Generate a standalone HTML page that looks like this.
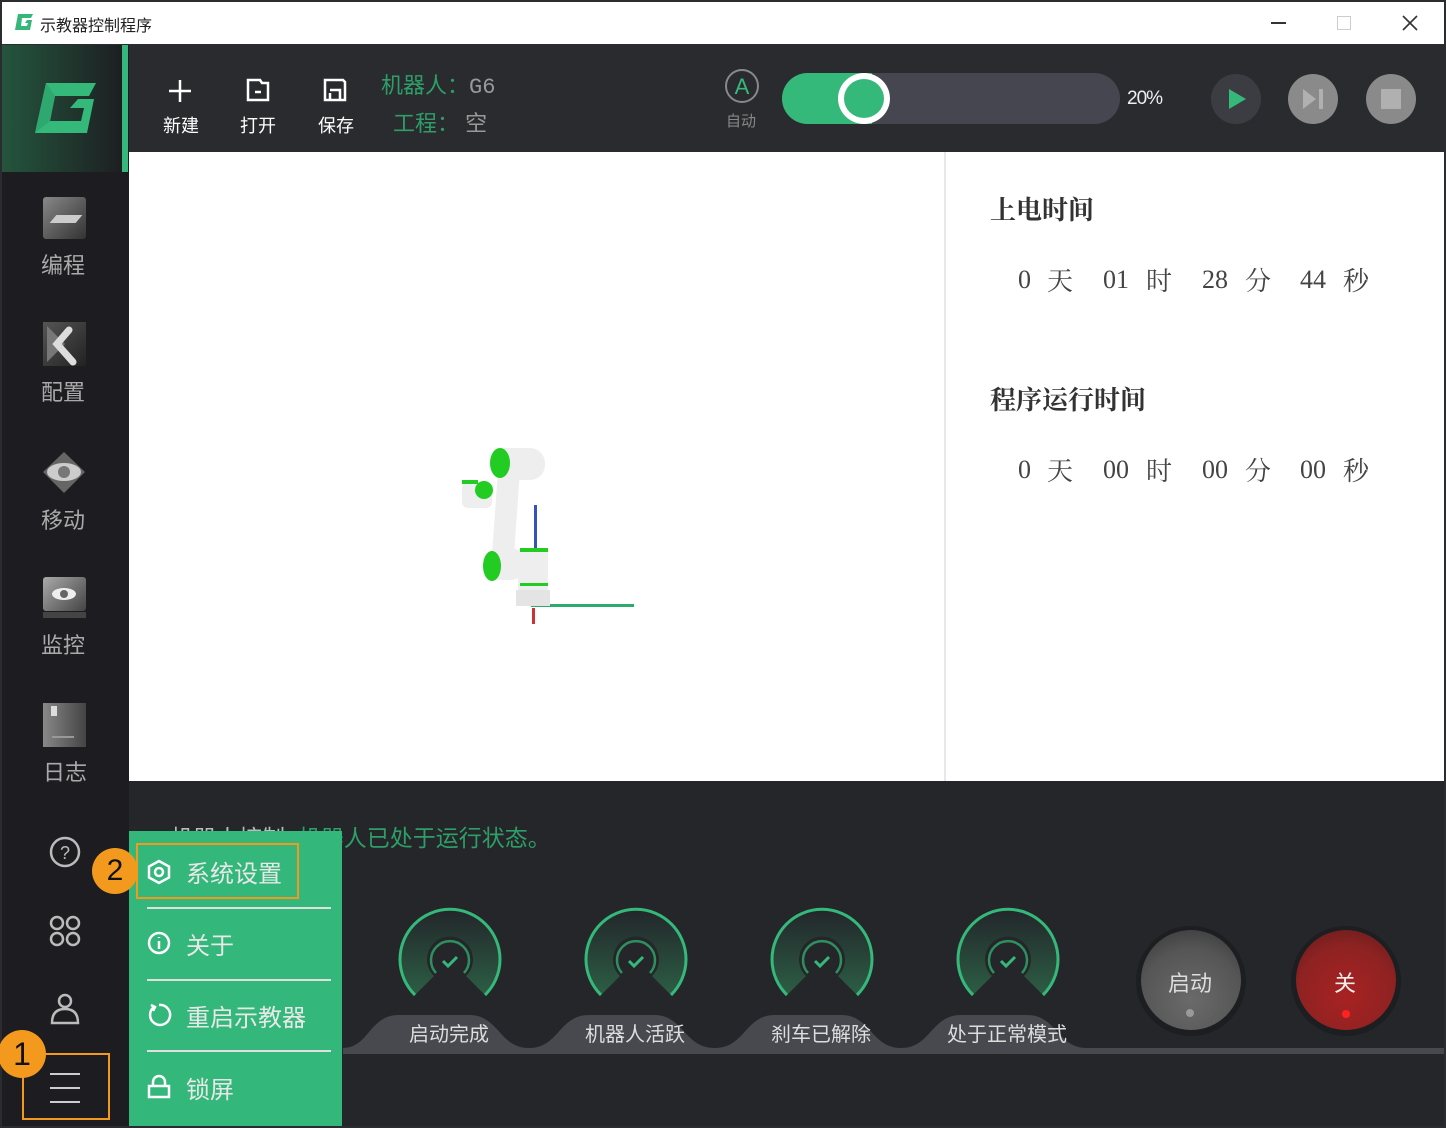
<!DOCTYPE html>
<html><head><meta charset="utf-8">
<style>
*{margin:0;padding:0;box-sizing:border-box}
body{width:1446px;height:1128px;overflow:hidden;background:#2b2c30;font-family:"Liberation Sans","Noto Sans CJK SC",sans-serif;position:relative}
.abs{position:absolute}
.t{white-space:nowrap}
.tm{position:absolute;font-size:26px;color:#444;font-family:'Liberation Serif','Noto Serif CJK SC',serif;white-space:nowrap}
.d{margin-top:4px}
</style></head><body>
<div class="abs" style="left:2px;top:2px;width:1442px;height:42px;background:#fff"></div>
<svg class="abs" style="left:14px;top:13px" width="20" height="18" viewBox="0 0 20 18"><path d="M4 1 L19 1 L17 5 L8 5 L7 13 L13 13 L14 10 L11 10 L13 7 L18 7 L16 17 L1 17 Z" fill="#35b77b"/></svg>
<div class="abs t" style="left:40px;top:12px;font-size:16px;color:#222">示教器控制程序</div>
<div class="abs" style="left:1271px;top:22px;width:15px;height:1.5px;background:#333"></div>
<div class="abs" style="left:1337px;top:16px;width:14px;height:14px;border:1px solid #ccc"></div>
<svg class="abs" style="left:1402px;top:15px" width="16" height="16"><path d="M1 1L15 15M15 1L1 15" stroke="#333" stroke-width="1.6"/></svg>
<div class="abs" style="left:2px;top:45px;width:1442px;height:107px;background:#2a2b2f"></div>
<div class="abs" style="left:2px;top:45px;width:127px;height:1081px;background:#1d1d21"></div>
<div class="abs" style="left:2px;top:45px;width:120px;height:127px;background:linear-gradient(90deg,#24553d,#1d1f22)"></div>
<div class="abs" style="left:122px;top:45px;width:6px;height:127px;background:#34b97b"></div>
<svg class="abs" style="left:0;top:0" width="130" height="180"><path d="M46 83 L96 83 L89 96 L55 96 L50 121 L81 121 L84 108 L70 108 L78 99 L94 99 L87 133 L35 133 Z" fill="#35b97b"/><path d="M46 83 L55 96 L50 121 L35 133 Z" fill="#2ea86f"/></svg>
<div class="abs" style="left:43px;top:197px;width:43px;height:42px;border-radius:3px;background:linear-gradient(135deg,#888,#333)"></div>
<div class="abs" style="left:53px;top:215px;width:26px;height:8px;background:#ccc;transform:skewX(-40deg)"></div>
<div class="abs t" style="left:41px;top:248px;font-size:22px;color:#aaa">编程</div>
<div class="abs" style="left:43px;top:322px;width:43px;height:44px;background:linear-gradient(135deg,#555,#222)"></div>
<svg class="abs" style="left:43px;top:322px" width="43" height="44"><path d="M4 4 L22 22 L4 40 Z" fill="#777"/><path d="M26 8 L14 22 L30 40" stroke="#ddd" stroke-width="7" fill="none" stroke-linecap="round"/></svg>
<div class="abs t" style="left:41px;top:375px;font-size:22px;color:#aaa">配置</div>
<svg class="abs" style="left:42px;top:450px" width="45" height="45"><path d="M22 2 L43 22 L22 43 L1 22 Z" fill="#666"/><ellipse cx="22" cy="22" rx="17" ry="9" fill="#ccc"/><circle cx="22" cy="22" r="6" fill="#777"/></svg>
<div class="abs t" style="left:41px;top:503px;font-size:22px;color:#aaa">移动</div>
<div class="abs" style="left:43px;top:577px;width:43px;height:34px;border-radius:3px;background:linear-gradient(135deg,#aaa,#444)"></div>
<div class="abs" style="left:43px;top:612px;width:43px;height:6px;background:#444"></div>
<svg class="abs" style="left:43px;top:577px" width="43" height="34"><ellipse cx="21" cy="17" rx="12" ry="6" fill="#eee"/><circle cx="21" cy="17" r="4" fill="#666"/></svg>
<div class="abs t" style="left:41px;top:628px;font-size:22px;color:#aaa">监控</div>
<div class="abs" style="left:43px;top:703px;width:43px;height:44px;background:linear-gradient(90deg,#888,#444)"></div>
<div class="abs" style="left:51px;top:706px;width:6px;height:10px;background:#ddd"></div>
<div class="abs" style="left:52px;top:736px;width:22px;height:2px;background:#999"></div>
<div class="abs t" style="left:43px;top:755px;font-size:22px;color:#aaa">日志</div>
<svg class="abs" style="left:45px;top:830px" width="40" height="200" fill="none" stroke="#bbb" stroke-width="2.5"><circle cx="20" cy="22" r="14"/><text x="20" y="29" font-size="18" fill="#bbb" stroke="none" text-anchor="middle" font-family="Liberation Sans">?</text><circle cx="12" cy="93" r="6"/><circle cx="28" cy="93" r="6"/><circle cx="12" cy="109" r="6"/><circle cx="28" cy="109" r="6"/><circle cx="20" cy="171" r="6"/><path d="M7 193 Q7 179 20 179 Q33 179 33 193 Z"/></svg>
<div class="abs" style="left:22px;top:1053px;width:88px;height:67px;border:2px solid #f39a1e"></div>
<div class="abs" style="left:50px;top:1073px;width:30px;height:2px;background:#ccc"></div>
<div class="abs" style="left:50px;top:1087px;width:30px;height:2px;background:#ccc"></div>
<div class="abs" style="left:50px;top:1101px;width:30px;height:2px;background:#ccc"></div>
<div class="abs" style="left:-2px;top:1030px;width:48px;height:48px;border-radius:50%;background:#f39a1e;font-size:32px;color:#111;text-align:center;line-height:48px">1</div>
<svg class="abs" style="left:167px;top:78px" width="26" height="26"><path d="M13 2V24M2 13H24" stroke="#fff" stroke-width="2.5"/></svg>
<div class="abs t" style="left:163px;top:112px;font-size:18px;color:#fff">新建</div>
<svg class="abs" style="left:246px;top:78px" width="24" height="24" fill="none" stroke="#fff" stroke-width="2.5"><path d="M2 2H14L16 5H22V22H2Z"/><path d="M9 14H15"/></svg>
<div class="abs t" style="left:240px;top:112px;font-size:18px;color:#fff">打开</div>
<svg class="abs" style="left:323px;top:78px" width="24" height="24" fill="none" stroke="#fff" stroke-width="2.5"><path d="M2 2H20L22 4V22H2Z"/><path d="M7 12H17V22M7 15V22"/></svg>
<div class="abs t" style="left:318px;top:112px;font-size:18px;color:#fff">保存</div>
<div class="abs t" style="left:381px;top:68px;font-size:22px;color:#2e9e68">机器人：<span style="color:#999;font-family:'Liberation Mono',monospace">G6</span></div>
<div class="abs t" style="left:393px;top:106px;font-size:22px;color:#2e9e68">工程：&nbsp;<span style="color:#999">空</span></div>
<svg class="abs" style="left:724px;top:68px" width="38" height="36"><circle cx="18" cy="18" r="16" fill="none" stroke="#888" stroke-width="2"/><text x="18" y="26" font-size="22" fill="#35b97b" text-anchor="middle" font-family="Liberation Sans">A</text></svg>
<div class="abs t" style="left:726px;top:110px;font-size:15px;color:#888">自动</div>
<div class="abs" style="left:782px;top:73px;width:338px;height:51px;border-radius:26px;background:#454650"></div>
<div class="abs" style="left:782px;top:73px;width:90px;height:51px;border-radius:26px 0 0 26px;background:#35b97b"></div>
<div class="abs" style="left:838px;top:73px;width:52px;height:51px;border-radius:50%;background:#35b97b;border:6px solid #fff"></div>
<div class="abs t" style="left:1127px;top:88px;font-size:19px;color:#eee;letter-spacing:-1px">20%</div>
<div class="abs" style="left:1211px;top:74px;width:50px;height:50px;border-radius:50%;background:#3c3d42"></div>
<svg class="abs" style="left:1228px;top:88px" width="20" height="22"><path d="M1 1L18 11L1 21Z" fill="#35b97b"/></svg>
<div class="abs" style="left:1288px;top:74px;width:50px;height:50px;border-radius:50%;background:#8a8a8a"></div>
<svg class="abs" style="left:1302px;top:88px" width="24" height="22"><path d="M1 1L14 11L1 21Z" fill="#b0b0b0"/><rect x="17" y="1" width="4" height="20" fill="#b0b0b0"/></svg>
<div class="abs" style="left:1366px;top:74px;width:50px;height:50px;border-radius:50%;background:#8a8a8a"></div>
<div class="abs" style="left:1381px;top:89px;width:20px;height:20px;background:#b0b0b0"></div>
<div class="abs" style="left:129px;top:152px;width:1315px;height:629px;background:#fff"></div>
<div class="abs" style="left:944px;top:152px;width:2px;height:629px;background:#e8e8e8"></div>
<div class="abs t" style="left:990px;top:190px;font-size:26px;font-weight:bold;color:#333;font-family:'Liberation Serif','Noto Serif CJK SC',serif">上电时间</div>
<div class="tm d" style="left:1018px;top:261px">0</div><div class="tm" style="left:1047px;top:261px">天</div>
<div class="tm d" style="left:1103px;top:261px">01</div><div class="tm" style="left:1146px;top:261px">时</div>
<div class="tm d" style="left:1202px;top:261px">28</div><div class="tm" style="left:1245px;top:261px">分</div>
<div class="tm d" style="left:1300px;top:261px">44</div><div class="tm" style="left:1343px;top:261px">秒</div>
<div class="abs t" style="left:990px;top:380px;font-size:26px;font-weight:bold;color:#333;font-family:'Liberation Serif','Noto Serif CJK SC',serif">程序运行时间</div>
<div class="tm d" style="left:1018px;top:451px">0</div><div class="tm" style="left:1047px;top:451px">天</div>
<div class="tm d" style="left:1103px;top:451px">00</div><div class="tm" style="left:1146px;top:451px">时</div>
<div class="tm d" style="left:1202px;top:451px">00</div><div class="tm" style="left:1245px;top:451px">分</div>
<div class="tm d" style="left:1300px;top:451px">00</div><div class="tm" style="left:1343px;top:451px">秒</div>
<svg class="abs" style="left:440px;top:430px" width="210" height="200">
<rect x="91" y="174" width="103" height="3" fill="#2eaa6e"/>
<rect x="94" y="75" width="3" height="60" fill="#3355bb"/>
<rect x="92" y="178" width="3" height="16" fill="#c33"/>
<path d="M78 120 h30 v50 h-30z" fill="#eee"/>
<path d="M76 160 h34 v16 h-34z" fill="#e4e4e4"/>
<path d="M58 40 L80 40 L74 125 L52 125 Z" fill="#eee"/>
<rect x="50" y="18" width="55" height="32" rx="15" fill="#eee"/>
<ellipse cx="60" cy="33" rx="10" ry="15" fill="#22cc22"/>
<rect x="45" y="118" width="40" height="32" rx="14" fill="#eee"/>
<ellipse cx="52" cy="136" rx="9" ry="15" fill="#22cc22"/>
<rect x="22" y="52" width="30" height="26" rx="6" fill="#eee"/>
<ellipse cx="44" cy="60" rx="9" ry="9" fill="#22cc22"/>
<rect x="22" y="50" width="16" height="4" fill="#22cc22"/>
<rect x="80" y="118" width="28" height="4" fill="#22cc22"/>
<rect x="80" y="153" width="28" height="3" fill="#22cc22"/>
</svg>
<div class="abs" style="left:129px;top:781px;width:1315px;height:345px;background:#25262a"></div>
<div class="abs t" style="left:170px;top:819px;font-size:23px;color:#bbb">机器人控制&nbsp;&nbsp;<span style="color:#2e9e68">机器人已处于运行状态。</span></div>
<svg class="abs" style="left:129px;top:900px" width="1315" height="160">
<defs><linearGradient id="g" x1="0" y1="0" x2="0" y2="1"><stop offset="0" stop-color="#23262a"/><stop offset="1" stop-color="#2c5e45"/></linearGradient></defs>
<path d="M214 148 C240 148 240 115 270 115 L340 115 C370 115 370 148 400 148 C430 148 430 115 460 115 L525 115 C555 115 555 148 586 148 C616 148 616 115 646 115 L712 115 C742 115 742 148 772 148 C802 148 802 115 832 115 L898 115 C928 115 928 148 958 148 L1315 148 L1315 154 L214 154 Z" fill="#48494e"/>
<g id="gg">
<path d="M286 95 A50 50 0 1 1 356 95 L337 76 A23 23 0 1 0 305 76 Z" fill="url(#g)"/>
<path d="M286 95 A50 50 0 1 1 356 95" fill="none" stroke="#35b97b" stroke-width="3"/>
<path d="M307 73 A19 19 0 1 1 335 73" fill="none" stroke="#2e8f60" stroke-width="2.5"/>
<path d="M314 61 L319 66 L328 57" fill="none" stroke="#35b97b" stroke-width="3"/>
</g>
<use href="#gg" x="186"/><use href="#gg" x="372"/><use href="#gg" x="558"/>
</svg>
<div class="abs t" style="left:409px;top:1018px;font-size:20px;color:#ddd">启动完成</div>
<div class="abs t" style="left:585px;top:1018px;font-size:20px;color:#ddd">机器人活跃</div>
<div class="abs t" style="left:771px;top:1018px;font-size:20px;color:#ddd">刹车已解除</div>
<div class="abs t" style="left:947px;top:1018px;font-size:20px;color:#ddd">处于正常模式</div>
<div class="abs" style="left:1136px;top:926px;width:110px;height:110px;border-radius:50%;background:#1d1e21"></div>
<div class="abs" style="left:1141px;top:930px;width:100px;height:100px;border-radius:50%;background:radial-gradient(circle at 50% 70%,#6a6a6a,#555 60%,#333)"></div>
<div class="abs t" style="left:1168px;top:966px;font-size:22px;color:#ddd">启动</div>
<div class="abs" style="left:1186px;top:1009px;width:8px;height:8px;border-radius:50%;background:#999"></div>
<div class="abs" style="left:1291px;top:926px;width:110px;height:110px;border-radius:50%;background:#1d1e21"></div>
<div class="abs" style="left:1296px;top:930px;width:100px;height:100px;border-radius:50%;background:radial-gradient(circle at 50% 65%,#a82222,#8e2222 60%,#5a1c1c)"></div>
<div class="abs t" style="left:1334px;top:966px;font-size:22px;color:#eee">关</div>
<div class="abs" style="left:1342px;top:1010px;width:8px;height:8px;border-radius:50%;background:#f22"></div>
<div class="abs" style="left:129px;top:831px;width:213px;height:295px;background:#33b77a"></div>
<div class="abs" style="left:136px;top:843px;width:163px;height:56px;border:2px solid #f39a1e"></div>
<div class="abs" style="left:92px;top:848px;width:46px;height:46px;border-radius:50%;background:#f39a1e;font-size:30px;color:#111;text-align:center;line-height:46px">2</div>
<svg class="abs" style="left:146px;top:859px" width="26" height="26" fill="none" stroke="#fff" stroke-width="2.5"><path d="M13 2L23 7.5V18.5L13 24L3 18.5V7.5Z"/><circle cx="13" cy="13" r="4"/></svg>
<div class="abs t" style="left:186px;top:854px;font-size:24px;color:#e8e8e8">系统设置</div>
<div class="abs" style="left:147px;top:907px;width:184px;height:2px;background:#e0e0e0"></div>
<svg class="abs" style="left:146px;top:930px" width="26" height="26" fill="none" stroke="#fff" stroke-width="2.5"><circle cx="13" cy="13" r="10"/><path d="M13 11V19M13 7V8"/></svg>
<div class="abs t" style="left:186px;top:926px;font-size:24px;color:#e8e8e8">关于</div>
<div class="abs" style="left:147px;top:979px;width:184px;height:2px;background:#e0e0e0"></div>
<svg class="abs" style="left:146px;top:1002px" width="26" height="26" fill="none" stroke="#fff" stroke-width="2.5"><path d="M8 5A10 10 0 1 0 13 3"/><path d="M5 3L9 5L7 9"/></svg>
<div class="abs t" style="left:186px;top:998px;font-size:24px;color:#e8e8e8">重启示教器</div>
<div class="abs" style="left:147px;top:1050px;width:184px;height:2px;background:#e0e0e0"></div>
<svg class="abs" style="left:146px;top:1074px" width="26" height="26" fill="none" stroke="#fff" stroke-width="2.5"><rect x="3" y="12" width="20" height="11"/><path d="M7 12V8A6 6 0 0 1 19 8V12"/></svg>
<div class="abs t" style="left:186px;top:1070px;font-size:24px;color:#e8e8e8">锁屏</div>
</body></html>
